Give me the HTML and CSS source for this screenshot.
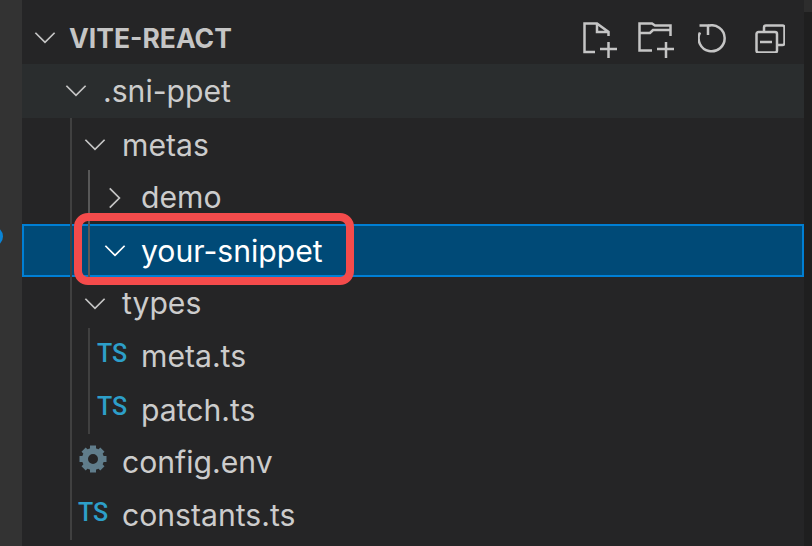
FILE: index.html
```html
<!DOCTYPE html>
<html lang="en">
<head>
  <meta charset="UTF-8" />
  <title>Explorer</title>
  <link rel="stylesheet" href="styles.css">
</head>
<body>
  <div class="workbench">
    <div class="activity-bar"><span class="activity-badge"></span></div>

    <div class="sidebar">
      <div class="section-header">
        <svg class="chevron" viewBox="0 0 26 16"><path d="M2 2l11 11L24 2" /></svg>
        <span class="section-title">VITE-REACT</span>
        <div class="actions">
          <svg class="action action-new-file" viewBox="0 0 34 36"><path d="M12 30H1.500V1.500H14L25.500 10v4M14 1.500V10h11.500M17 27h17M25.500 20v16" /></svg>
          <svg class="action action-new-folder" viewBox="0 0 36 36"><path d="M14 28.500H1.500V1.500H14l3 2h15.500v10.500M1.500 11H12l3-3h17.500M19 27h17M28 20v16" /></svg>
          <svg class="action action-refresh" viewBox="0 0 29 29"><path d="M10 1.800A13 13 0 1 1 2 8.500M1.500 1.500H10V11" /></svg>
          <svg class="action action-collapse" viewBox="0 0 30 29"><path d="M9 7V3.500a2 2 0 0 1 2-2h16.500a2 2 0 0 1 2 2V19a2 2 0 0 1-2 2H22M3.500 8H20a2 2 0 0 1 2 2v16.500a2 2 0 0 1-2 2H3.500a2 2 0 0 1-2-2V10a2 2 0 0 1 2-2zM5 18h12" /></svg>
        </div>
      </div>

      <div class="tree">
        <div class="row row-hover depth-1">
          <svg class="chevron" viewBox="0 0 26 16"><path d="M2 2l11 11L24 2" /></svg>
          <span class="label">.sni-ppet</span>
        </div>
        <div class="row depth-2">
          <svg class="chevron" viewBox="0 0 26 16"><path d="M2 2l11 11L24 2" /></svg>
          <span class="label">metas</span>
        </div>
        <div class="row depth-3 lift">
          <svg class="chevron chevron-right" viewBox="0 0 16 26"><path d="M2 2l11 11L2 24" /></svg>
          <span class="label">demo</span>
        </div>
        <div class="row row-selected depth-3">
          <svg class="chevron" viewBox="0 0 26 16"><path d="M2 2l11 11L24 2" /></svg>
          <span class="label">your-snippet</span>
        </div>
        <div class="row depth-2 lift">
          <svg class="chevron" viewBox="0 0 26 16"><path d="M2 2l11 11L24 2" /></svg>
          <span class="label">types</span>
        </div>
        <div class="row depth-3 file lift">
          <span class="ts-icon">TS</span>
          <span class="label">meta.ts</span>
        </div>
        <div class="row depth-3 file">
          <span class="ts-icon">TS</span>
          <span class="label">patch.ts</span>
        </div>
        <div class="row depth-2 file lift">
          <svg class="gear" viewBox="0 0 28 28">
            <circle class="gear-ring" cx="14" cy="14" r="8" />
            <path class="gear-teeth" d="M11 .5h6v5h-6zM11 22.500h6v5h-6zM.5 11h5v6h-5zM22.500 11h5v6h-5zM2.500 6.700l4.200-4.200 4 4-4.200 4.200zM17.300 21.500l4.200-4.200 4 4-4.200 4.200zM2.500 21.300l4-4 4.200 4.200-4 4zM17.300 6.500l4-4 4.200 4.200-4 4z" />
          </svg>
          <span class="label">config.env</span>
        </div>
        <div class="row depth-2 file lift">
          <span class="ts-icon">TS</span>
          <span class="label">constants.ts</span>
        </div>
      </div>

      <span class="guide guide-root"></span>
      <span class="guide guide-metas"></span>
      <span class="guide guide-types"></span>
      <div class="callout"></div>
    </div>

    <div class="scroll-strip"><div class="scroll-corner"></div></div>
  </div>
</body>
</html>
```

FILE: styles.css
```css
html, body {
  margin: 0;
  padding: 0;
  height: 100%;
  overflow: hidden;
  background: #252526;
}

.workbench {
  display: flex;
  width: 812px;
  height: 546px;
  font-family: 'Inter', sans-serif;
}

.activity-bar {
  width: 22px;
  background: #333333;
  position: relative;
  overflow: hidden;
}

.activity-badge {
  position: absolute;
  left: -18px;
  top: 226px;
  width: 15px;
  height: 15px;
  border: 3px solid #0a84d6;
  border-radius: 50%;
}

.sidebar {
  flex: 1;
  position: relative;
  background: #252526;
}

.scroll-strip {
  width: 8px;
  background: #1f1f1f;
}

.scroll-corner {
  height: 12px;
  background: #2d2d2d;
}

.section-header {
  display: flex;
  align-items: center;
  height: 64px;
  padding: 12px 0 0 11px;
  box-sizing: border-box;
}

.section-title {
  margin-left: 12px;
  font-size: 26.500px;
  font-weight: 700;
  color: #c5c5c5;
}

.actions {
  display: flex;
  align-items: flex-start;
  margin-left: auto;
  margin-right: 19px;
  align-self: flex-start;
  padding-top: 10px;
}

.action {
  fill: none;
  stroke: #c5c5c5;
  stroke-width: 2.500;
  flex: none;
}

.action-new-file {
  width: 34px;
  height: 36px;
}

.action-new-folder {
  width: 36px;
  height: 36px;
  margin-left: 21px;
}

.action-refresh {
  width: 29px;
  height: 29px;
  margin: 2px 0 0 24px;
}

.action-collapse {
  width: 30px;
  height: 29px;
  margin: 2px 0 0 28px;
}

.chevron {
  width: 24px;
  height: 14px;
  flex: none;
  fill: none;
  stroke: #c5c5c5;
  stroke-width: 2;
}

.chevron-right {
  width: 14px;
  height: 24px;
  margin: 0 5px;
}

.row {
  display: flex;
  align-items: center;
  height: 53px;
  box-sizing: border-box;
}

.row-hover {
  height: 54px;
  background: #2a2d2e;
}

.row-selected {
  background: #004a77;
  border: 2px solid #007fd4;
  color: #ffffff;
}

.depth-1 { padding-left: 42px; }
.depth-2 { padding-left: 61px; }
.depth-3 { padding-left: 81px; }

.row-selected.depth-3 { padding-left: 79px; }

.label {
  margin-left: 15px;
  font-size: 30.150px;
  color: #cccccc;
}

.depth-3 .label {
  margin-left: 14px;
}

.lift .label {
  margin-bottom: 2px;
}

.row-selected .label {
  color: #ffffff;
}

.row-selected .chevron {
  stroke: #ffffff;
}

.file .label {
  margin-left: 0;
}

.ts-icon {
  margin-bottom: 7px;
  font-family: 'Roboto', sans-serif;
  font-size: 25px;
  font-weight: 500;
  color: #2d9fc9;
}

.depth-3 .ts-icon {
  margin-left: -6px;
  width: 44px;
}

.depth-2 .ts-icon {
  margin-left: -5px;
  width: 44px;
}

.gear {
  width: 28px;
  height: 28px;
  margin: 0 15px 8px -4px;
  flex: none;
}

.gear-ring {
  fill: none;
  stroke: #607d8b;
  stroke-width: 6;
}

.gear-teeth {
  fill: #607d8b;
}

.guide {
  position: absolute;
  width: 2px;
  background: #404040;
}

.guide-root {
  left: 48px;
  top: 118px;
  height: 422px;
}

.guide-metas {
  left: 66px;
  top: 170px;
  height: 107px;
  background: #585858;
}

.guide-types {
  left: 66px;
  top: 328px;
  height: 106px;
}

.callout {
  position: absolute;
  left: 52px;
  top: 213px;
  width: 280px;
  height: 72px;
  box-sizing: border-box;
  border: 8px solid #f44b4b;
  border-radius: 14px;
}
```
